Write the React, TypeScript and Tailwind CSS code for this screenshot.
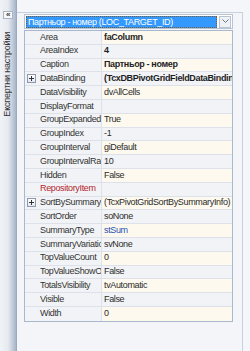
const rows: { name: string; value: string; bold?: boolean; plus?: boolean; nameRed?: boolean; blue?: boolean }[] = [
  { name: "Area", value: "faColumn", bold: true },
  { name: "AreaIndex", value: "4", bold: true },
  { name: "Caption", value: "Партньор - номер", bold: true },
  { name: "DataBinding", value: "(TcxDBPivotGridFieldDataBinding)", bold: true, plus: true },
  { name: "DataVisibility", value: "dvAllCells" },
  { name: "DisplayFormat", value: "" },
  { name: "GroupExpanded", value: "True" },
  { name: "GroupIndex", value: "-1" },
  { name: "GroupInterval", value: "giDefault" },
  { name: "GroupIntervalRange", value: "10" },
  { name: "Hidden", value: "False" },
  { name: "RepositoryItem", value: "", nameRed: true },
  { name: "SortBySummaryInfo", value: "(TcxPivotGridSortBySummaryInfo)", plus: true },
  { name: "SortOrder", value: "soNone" },
  { name: "SummaryType", value: "stSum", blue: true },
  { name: "SummaryVariation", value: "svNone" },
  { name: "TopValueCount", value: "0" },
  { name: "TopValueShowOthers", value: "False" },
  { name: "TotalsVisibility", value: "tvAutomatic" },
  { name: "Visible", value: "False" },
  { name: "Width", value: "0" },
];

const PlusBox = () => (
  <div className="relative w-[9px] h-[9px] border border-[#8d99aa] bg-gradient-to-b from-white to-[#e3e7ee]">
    <div className="absolute left-[1px] top-[3px] w-[5px] h-[1px] bg-[#333]" />
    <div className="absolute left-[3px] top-[1px] w-[1px] h-[5px] bg-[#333]" />
  </div>
);

const App = () => {
  return (
    <div className="flex w-[250px] h-[351px] bg-[#f4f6f9] font-['Liberation_Sans',Arial,sans-serif] text-[9px] tracking-[-0.35px] text-[#2b2b2b] overflow-hidden">
      {/* collapsed side panel */}
      <div className="w-[17px] shrink-0 h-full flex flex-col items-start bg-gradient-to-r from-[#f1f3f6] via-[#e6eaf0] to-[#a8b5c8] border-r border-[#9aa9bf]">
        <div className="mt-[11px] ml-[3px] w-[10px] h-[8px] border border-[#aab5c4] bg-[#f7f8fa] flex items-center justify-center text-[8px] leading-none font-bold text-[#333]">
          «
        </div>
        <div className="mt-[13px] ml-[2px] [writing-mode:vertical-rl] rotate-180 text-[9px] leading-[10px] tracking-[-0.2px] whitespace-nowrap text-[#333]">
          Експертни настройки
        </div>
      </div>

      {/* inspector panel */}
      <div className="flex-1 min-w-0 pt-[12px] pr-[7px]">
        <div className="h-full border-t border-r border-[#c7d0dd] bg-[#f3f5f8] pl-[7px] pr-[9px] pt-[1px]">
          {/* combo */}
          <div className="flex items-center h-[15px] border border-[#b9c4d3] bg-white px-[1px]">
            <div className="flex-1 min-w-0 h-[12px] bg-[#3399ff] border border-dotted border-[#7a5a30] text-white leading-[10px] pl-[1px] whitespace-nowrap overflow-hidden">
              Партньор - номер (LOC_TARGET_ID)
            </div>
            <div className="ml-[2px] shrink-0 w-[12px] h-[12px] border border-[#b9c4d3] bg-[#eef1f5] flex items-center justify-center">
              <svg width="7" height="5" viewBox="0 0 7 5">
                <path d="M0.5 0.5 L3.5 3.5 L6.5 0.5" fill="none" stroke="#6b7585" strokeWidth="1" />
              </svg>
            </div>
          </div>

          {/* property grid */}
          <div className="mt-[1px] border border-[#a9b8cc] bg-[#f2f3f6]">
            {rows.map((r, i) => (
              <div
                key={r.name}
                className={`flex h-[13.8px] items-stretch ${i < rows.length - 1 ? "border-b border-[#dde2ea]" : ""}`}
              >
                <div className="w-[12px] shrink-0 flex items-center justify-center">{r.plus && <PlusBox />}</div>
                <div
                  className={`w-[65px] shrink-0 pl-[3px] flex items-center whitespace-nowrap overflow-hidden border-r border-[#dde2ea] ${
                    r.nameRed ? "text-[#b3262f]" : "text-[#333]"
                  }`}
                >
                  {r.name}
                </div>
                <div
                  className={`flex-1 min-w-0 pl-[2px] flex items-center whitespace-nowrap overflow-hidden ${
                    i % 2 === 0 ? "bg-[#fef9ee]" : "bg-[#f2f3f6]"
                  } ${r.bold ? "font-bold text-[#1e1e1e]" : ""} ${r.blue ? "text-[#1f4fb5]" : ""}`}
                >
                  {r.value}
                </div>
              </div>
            ))}
          </div>
        </div>
      </div>
    </div>
  );
};

export default App;
